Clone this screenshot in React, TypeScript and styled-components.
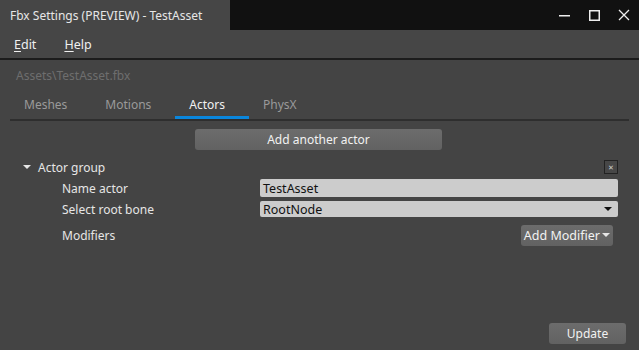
import { createGlobalStyle } from 'styled-components'
import styled from 'styled-components'

const GlobalStyle = createGlobalStyle`
  html, body {
    margin: 0;
    padding: 0;
    background: #444444;
    font-family: "Noto Sans", "Open Sans", sans-serif;
  }
`

const Window = styled.div`
  display: flex;
  flex-direction: column;
  width: 639px;
  height: 350px;
  background: #444444;
  overflow: hidden;
`

const TitleBar = styled.div`
  display: flex;
  height: 30px;
  background: #111111;
`
const TitleArea = styled.div`
  display: flex;
  align-items: center;
  width: 220px;
  padding-left: 10px;
  background: #464646;
  color: #e6e6e6;
  font-size: 12px;
`
const Controls = styled.div`
  display: flex;
  margin-left: auto;
  align-items: center;
`
const ControlButton = styled.div`
  display: flex;
  align-items: center;
  justify-content: center;
  width: 30px;
  height: 30px;
`

const MenuBar = styled.div`
  display: flex;
  align-items: center;
  gap: 28px;
  height: 28px;
  padding-left: 14px;
  background: #464646;
  border-bottom: 2px solid #1c1c1c;
  color: #f0f0f0;
  font-size: 12.5px;
`
const MenuItem = styled.span`
  u {
    text-decoration: underline;
    text-underline-offset: 2px;
  }
`

const Content = styled.div`
  display: flex;
  flex-direction: column;
  flex: 1;
  padding: 0 10px;
`

const PathLabel = styled.div`
  height: 32px;
  line-height: 31px;
  padding-left: 6px;
  color: #6e6e6e;
  font-size: 12px;
`

const TabBar = styled.div`
  display: flex;
  height: 27px;
  border-bottom: 2px solid #2e2e2e;
`
const Tab = styled.div<{ $active?: boolean }>`
  display: flex;
  align-items: center;
  padding: 0 24px 0 14px;
  color: ${(p) => (p.$active ? '#f2f2f2' : '#9a9a9a')};
  font-size: 12px;
  border-bottom: 3px solid ${(p) => (p.$active ? '#0a86dc' : 'transparent')};
`

const Centered = styled.div`
  display: flex;
  justify-content: center;
  padding-top: 8px;
  padding-right: 2px;
`

const Button = styled.div<{ $width?: number; $size?: number }>`
  display: flex;
  align-items: center;
  justify-content: center;
  gap: 2px;
  height: 21px;
  width: ${(p) => (p.$width ? `${p.$width}px` : 'auto')};
  padding: 0 3px;
  box-sizing: border-box;
  border-radius: 3px;
  background: linear-gradient(#6c6c6c, #626262);
  color: #f2f2f2;
  font-size: ${(p) => p.$size ?? 12}px;
`

const Group = styled.div`
  display: flex;
  flex-direction: column;
  padding: 7px 11px 0 13px;
`
const GroupHeader = styled.div`
  display: flex;
  align-items: center;
  height: 20px;
  color: #e6e6e6;
  font-size: 12px;
`
const Caret = styled.span<{ $color?: string }>`
  display: inline-block;
  width: 0;
  height: 0;
  border-left: 4px solid transparent;
  border-right: 4px solid transparent;
  border-top: 4px solid ${(p) => p.$color ?? '#e6e6e6'};
`
const GroupTitle = styled.span`
  margin-left: 7px;
`
const CloseBox = styled.div`
  display: flex;
  align-items: center;
  justify-content: center;
  margin-left: auto;
  width: 12px;
  height: 12px;
  border: 1px solid #222222;
  background: #474747;
  color: #d0d0d0;
  font-size: 7px;
  line-height: 1;
`

const Row = styled.div<{ $height: number }>`
  display: flex;
  align-items: center;
  height: ${(p) => p.$height}px;
  padding-left: 39px;
  color: #e6e6e6;
  font-size: 12px;
`
const RowLabel = styled.span`
  width: 198px;
`
const Field = styled.div<{ $height: number }>`
  display: flex;
  align-items: center;
  flex: 1;
  height: ${(p) => p.$height}px;
  padding: 0 6px 0 3px;
  background: #cccccc;
  border-radius: 2px;
  color: #111111;
  font-size: 12.5px;
`
const FieldCaretWrap = styled.span`
  margin-left: auto;
  display: flex;
`
const RightSlot = styled.div`
  display: flex;
  flex: 1;
  justify-content: flex-end;
  padding-right: 5px;
`

const Footer = styled.div`
  display: flex;
  justify-content: flex-end;
  margin-top: auto;
  padding: 0 3px 6px 0;
`

export default function App() {
  return (
    <>
      <GlobalStyle />
      <Window>
        <TitleBar>
          <TitleArea>Fbx Settings (PREVIEW) - TestAsset</TitleArea>
          <Controls>
            <ControlButton>
              <svg width="11" height="11" viewBox="0 0 11 11">
                <rect x="0" y="5" width="11" height="1.5" fill="#eeeeee" />
              </svg>
            </ControlButton>
            <ControlButton>
              <svg width="11" height="11" viewBox="0 0 11 11">
                <rect x="0.75" y="0.75" width="9.5" height="9.5" fill="none" stroke="#eeeeee" strokeWidth="1.5" />
              </svg>
            </ControlButton>
            <ControlButton>
              <svg width="12" height="12" viewBox="0 0 12 12">
                <path d="M1 1L11 11M11 1L1 11" stroke="#eeeeee" strokeWidth="1.3" />
              </svg>
            </ControlButton>
          </Controls>
        </TitleBar>
        <MenuBar>
          <MenuItem>
            <u>E</u>dit
          </MenuItem>
          <MenuItem>
            <u>H</u>elp
          </MenuItem>
        </MenuBar>
        <Content>
          <PathLabel>Assets\TestAsset.fbx</PathLabel>
          <TabBar>
            <Tab>Meshes</Tab>
            <Tab>Motions</Tab>
            <Tab $active>Actors</Tab>
            <Tab>PhysX</Tab>
          </TabBar>
          <Centered>
            <Button $width={247}>Add another actor</Button>
          </Centered>
          <Group>
            <GroupHeader>
              <Caret />
              <GroupTitle>Actor group</GroupTitle>
              <CloseBox>✕</CloseBox>
            </GroupHeader>
            <Row $height={22}>
              <RowLabel>Name actor</RowLabel>
              <Field $height={18}>TestAsset</Field>
            </Row>
            <Row $height={20}>
              <RowLabel>Select root bone</RowLabel>
              <Field $height={16}>
                RootNode
                <FieldCaretWrap>
                  <Caret $color="#111111" />
                </FieldCaretWrap>
              </Field>
            </Row>
            <Row $height={32}>
              <RowLabel>Modifiers</RowLabel>
              <RightSlot>
                <Button $size={12.5}>
                  Add Modifier
                  <Caret />
                </Button>
              </RightSlot>
            </Row>
          </Group>
          <Footer>
            <Button $width={77}>Update</Button>
          </Footer>
        </Content>
      </Window>
    </>
  )
}
